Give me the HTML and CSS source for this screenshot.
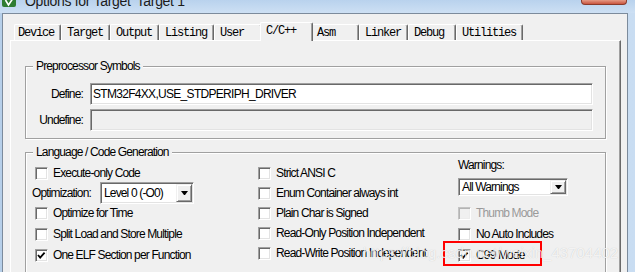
FILE: index.html
```html
<!DOCTYPE html>
<html lang="en">

<head>
    <meta charset="UTF-8">
    <title>Options for Target 'Target 1'</title>
    <link rel="stylesheet" href="styles.css">
</head>

<body>
    <div class="window">
        <div class="titlebar">
            <div class="title">
                <svg class="app-icon" viewBox="0 0 14 7">
                    <rect x="0" y="-5" width="14" height="12" rx="2" fill="#2f7d32"/>
                    <path d="M3.5 0 L6.5 5 L10.5 -1" fill="none" stroke="#fff" stroke-width="1.6"/>
                </svg>
                <span class="title-text">Options for Target 'Target 1'</span>
            </div>
            <div class="close-btn"></div>
        </div>

        <div class="frame">
            <div class="dialog">
                <div class="tabs">
                    <div class="tab first">Device</div>
                    <div class="tab">Target</div>
                    <div class="tab">Output</div>
                    <div class="tab">Listing</div>
                    <div class="tab">User</div>
                    <div class="tab active">C/C++</div>
                    <div class="tab">Asm</div>
                    <div class="tab">Linker</div>
                    <div class="tab">Debug</div>
                    <div class="tab">Utilities</div>
                </div>

                <div class="panel">
                    <fieldset class="group">
                        <legend>Preprocessor Symbols</legend>
                        <div class="sym-grid">
                            <label for="define">Define:</label>
                            <input class="edit" id="define" type="text" value="STM32F4XX,USE_STDPERIPH_DRIVER">
                            <label for="undefine">Undefine:</label>
                            <input class="edit" id="undefine" type="text" disabled>
                        </div>
                    </fieldset>

                    <fieldset class="group group-lang">
                        <legend>Language / Code Generation</legend>
                        <div class="cols">
                            <div class="col col-left">
                                <div class="check"><span class="box"></span>Execute-only Code</div>
                                <div class="opt-row">
                                    <span class="opt-label">Optimization:</span>
                                    <div class="combo combo-opt">
                                        <span class="combo-text">Level 0 (-O0)</span>
                                        <span class="combo-btn"></span>
                                    </div>
                                </div>
                                <div class="check"><span class="box"></span>Optimize for Time</div>
                                <div class="check"><span class="box"></span>Split Load and Store Multiple</div>
                                <div class="check"><span class="box checked"><svg viewBox="0 0 11 11"><path d="M2 5 L4.2 7.6 L8.6 2.6" fill="none" stroke="#000" stroke-width="1.8"/></svg></span>One ELF Section per Function</div>
                            </div>

                            <div class="col col-mid">
                                <div class="check"><span class="box"></span>Strict ANSI C</div>
                                <div class="check"><span class="box"></span>Enum Container always int</div>
                                <div class="check"><span class="box"></span>Plain Char is Signed</div>
                                <div class="check"><span class="box"></span>Read-Only Position Independent</div>
                                <div class="check"><span class="box"></span>Read-Write Position Independent</div>
                            </div>

                            <div class="col col-right">
                                <div class="warn-label">Warnings:</div>
                                <div class="combo combo-warn">
                                    <span class="combo-text">All Warnings</span>
                                    <span class="combo-btn"></span>
                                </div>
                                <div class="check disabled thumb"><span class="box"></span>Thumb Mode</div>
                                <div class="check"><span class="box"></span>No Auto Includes</div>
                                <div class="check marked"><span class="box checked"><svg viewBox="0 0 11 11"><path d="M2 5 L4.2 7.6 L8.6 2.6" fill="none" stroke="#000" stroke-width="1.8"/></svg></span>C99 Mode
                                    <div class="redbox"></div>
                                </div>
                            </div>
                        </div>
                    </fieldset>
                </div>
            </div>
        </div>
    </div>

    <div class="watermark">https://blog.csdn.net/weixin_43704402</div>
</body>

</html>
```

FILE: styles.css
```css
body {
    margin: 0;
    width: 635px;
    height: 272px;
    overflow: hidden;
    position: relative;
    background: #c2d8ee;
    font-family: "Liberation Sans", Arial, sans-serif;
    font-size: 12px;
    letter-spacing: -0.85px;
    color: #000;
}

.window {
    display: flex;
    flex-direction: column;
    height: 272px;
}

/* title bar, mostly cut off at the top */
.titlebar {
    flex: none;
    height: 13px;
    display: flex;
    justify-content: space-between;
    align-items: flex-start;
    padding: 0 8px 0 2px;
    background: linear-gradient(#b9d2ed, #cde0f4);
    overflow: hidden;
}

.title {
    display: flex;
    align-items: flex-start;
}

.app-icon {
    display: block;
    width: 14px;
    height: 7px;
}

.title-text {
    margin: -6px 0 0 9px;
    font-size: 14px;
    line-height: 14px;
    letter-spacing: -0.3px;
    color: #1b1b1b;
    white-space: nowrap;
}

.close-btn {
    width: 46px;
    height: 5px;
    box-sizing: border-box;
    border: 1px solid #8a3b2c;
    border-top: 0;
    border-radius: 0 0 4px 4px;
    background: linear-gradient(#e59a85, #c9553f);
}

.frame {
    flex: 1;
    display: flex;
    min-height: 0;
    padding: 0 7px 0 2px;
    background: linear-gradient(90deg, #b6cfe9, #c9ddf2);
}

.dialog {
    flex: 1;
    display: flex;
    flex-direction: column;
    background: #f0f0f0;
    border: 1px solid #7c8b9c;
    border-bottom: 0;
    padding: 8px 6px 0 7px;
}

/* tabs */
.tabs {
    display: flex;
    align-items: flex-start;
    height: 19px;
    padding-left: 4px;
    margin-bottom: -1px;
}

.tab {
    box-sizing: border-box;
    height: 16px;
    min-width: 48px;
    margin-top: 2px;
    padding: 3px 6px 0 5px;
    font-family: "Liberation Mono", monospace;
    font-size: 12px;
    line-height: 11px;
    letter-spacing: -1.2px;
    white-space: nowrap;
    background: #f0f0f0;
    border-top: 1px solid #fff;
    border-left: 1px solid #fff;
    border-right: 1px solid #696969;
    box-shadow: inset -1px 0 #a0a0a0;
    border-radius: 2px 2px 0 0;
}

.tab.first {
    min-width: 45px;
    padding-left: 3px;
}

.tab.active {
    position: relative;
    z-index: 1;
    height: 19px;
    min-width: 53px;
    margin: 0 -2px;
}

.panel {
    flex: 1;
    padding: 18px 14px 0 14px;
    border-top: 1px solid #fff;
    border-left: 1px solid #fff;
    border-right: 1px solid #696969;
    box-shadow: inset -1px 0 #a0a0a0;
}

/* group boxes */
.group {
    margin: 0;
    padding: 0;
    min-inline-size: 0;
    border: 1px solid #a0a0a0;
    box-shadow: 1px 1px 0 #fff, inset 1px 1px 0 #fff;
}

.group legend {
    margin-left: 7px;
    padding: 0 3px;
    line-height: 15px;
    background: #f0f0f0;
}

.group-lang {
    margin-top: 6px;
    height: 140px;
}

.sym-grid {
    display: grid;
    grid-template-columns: 57px 503px;
    column-gap: 7px;
    row-gap: 4px;
    align-items: center;
    padding: 9px 0 7px 0;
}

.sym-grid label {
    text-align: right;
}

.edit {
    box-sizing: border-box;
    width: 100%;
    height: 22px;
    margin: 0;
    padding: 0 2px;
    border: 1px solid;
    border-color: #a0a0a0 #fff #fff #a0a0a0;
    box-shadow: inset 1px 1px 0 #696969, inset -1px -1px 0 #e3e3e3;
    background: #fff;
    font: 12px "Liberation Sans", Arial, sans-serif;
    letter-spacing: -0.7px;
    color: #000;
    outline: none;
}

.edit:disabled {
    background: #f0f0f0;
}

/* language / code generation columns */
.cols {
    display: flex;
    padding-left: 6px;
}

.col {
    display: flex;
    flex-direction: column;
}

.col-left {
    width: 226px;
    padding-top: 7px;
    gap: 8px;
}

.col-mid {
    width: 200px;
    padding-top: 7px;
    gap: 7px;
}

.col-right {
    flex: 1;
}

.check {
    display: flex;
    align-items: center;
    height: 13px;
    line-height: 13px;
    white-space: nowrap;
}

.col-left .check {
    margin-left: 3px;
}

.box {
    flex: none;
    box-sizing: border-box;
    width: 13px;
    height: 13px;
    margin-right: 5px;
    border: 1px solid;
    border-color: #a0a0a0 #fff #fff #a0a0a0;
    box-shadow: inset 1px 1px 0 #696969, inset -1px -1px 0 #e3e3e3;
    background: #fff;
}

.box svg {
    display: block;
    width: 11px;
    height: 11px;
}

.check.disabled {
    color: #9a9a9a;
}

.check.disabled .box {
    border-color: #c4c4c4 #fff #fff #c4c4c4;
    box-shadow: inset 1px 1px 0 #b4b4b4, inset -1px -1px 0 #ececec;
    background: #f0f0f0;
}

.opt-row {
    display: flex;
    align-items: center;
    height: 22px;
    margin: -6px 0 -5px;
}

.opt-label {
    width: 68px;
}

.combo {
    box-sizing: border-box;
    display: flex;
    align-items: stretch;
    padding: 1px 1px 1px 2px;
    border: 1px solid;
    border-color: #a0a0a0 #fff #fff #a0a0a0;
    box-shadow: inset 1px 1px 0 #696969, inset -1px -1px 0 #e3e3e3;
    background: #fff;
}

.combo-opt {
    width: 94px;
    height: 22px;
}

.combo-text {
    flex: 1;
    display: flex;
    align-items: center;
    padding-left: 1px;
    white-space: nowrap;
}

.combo-btn {
    box-sizing: border-box;
    width: 16px;
    display: flex;
    align-items: center;
    justify-content: center;
    border: 1px solid;
    border-color: #f0f0f0 #696969 #696969 #f0f0f0;
    box-shadow: inset 1px 1px 0 #fff, inset -1px -1px 0 #a0a0a0;
    background: #f0f0f0;
}

.combo-btn::after {
    content: "";
    width: 1px;
    height: 0;
    border-top: 4px solid #000;
    border-left: 3px solid transparent;
    border-right: 3px solid transparent;
}

.warn-label {
    margin-top: -1px;
    line-height: 13px;
}

.combo-warn {
    width: 110px;
    height: 18px;
    margin-top: 6px;
}

.col-right .check {
    margin-top: 8px;
}

.col-right .check.thumb {
    margin-top: 11px;
}

.check.marked {
    position: relative;
}

.redbox {
    position: absolute;
    left: -15px;
    top: -8px;
    width: 99px;
    height: 25px;
    box-sizing: border-box;
    border: 2px solid #f00;
}

.watermark {
    position: absolute;
    left: 363px;
    top: 245px;
    font-size: 15px;
    line-height: 15px;
    letter-spacing: 0;
    color: rgba(255, 255, 255, 0.8);
    text-shadow: 0 0 1px rgba(0, 0, 0, 0.2);
    white-space: nowrap;
}
```
